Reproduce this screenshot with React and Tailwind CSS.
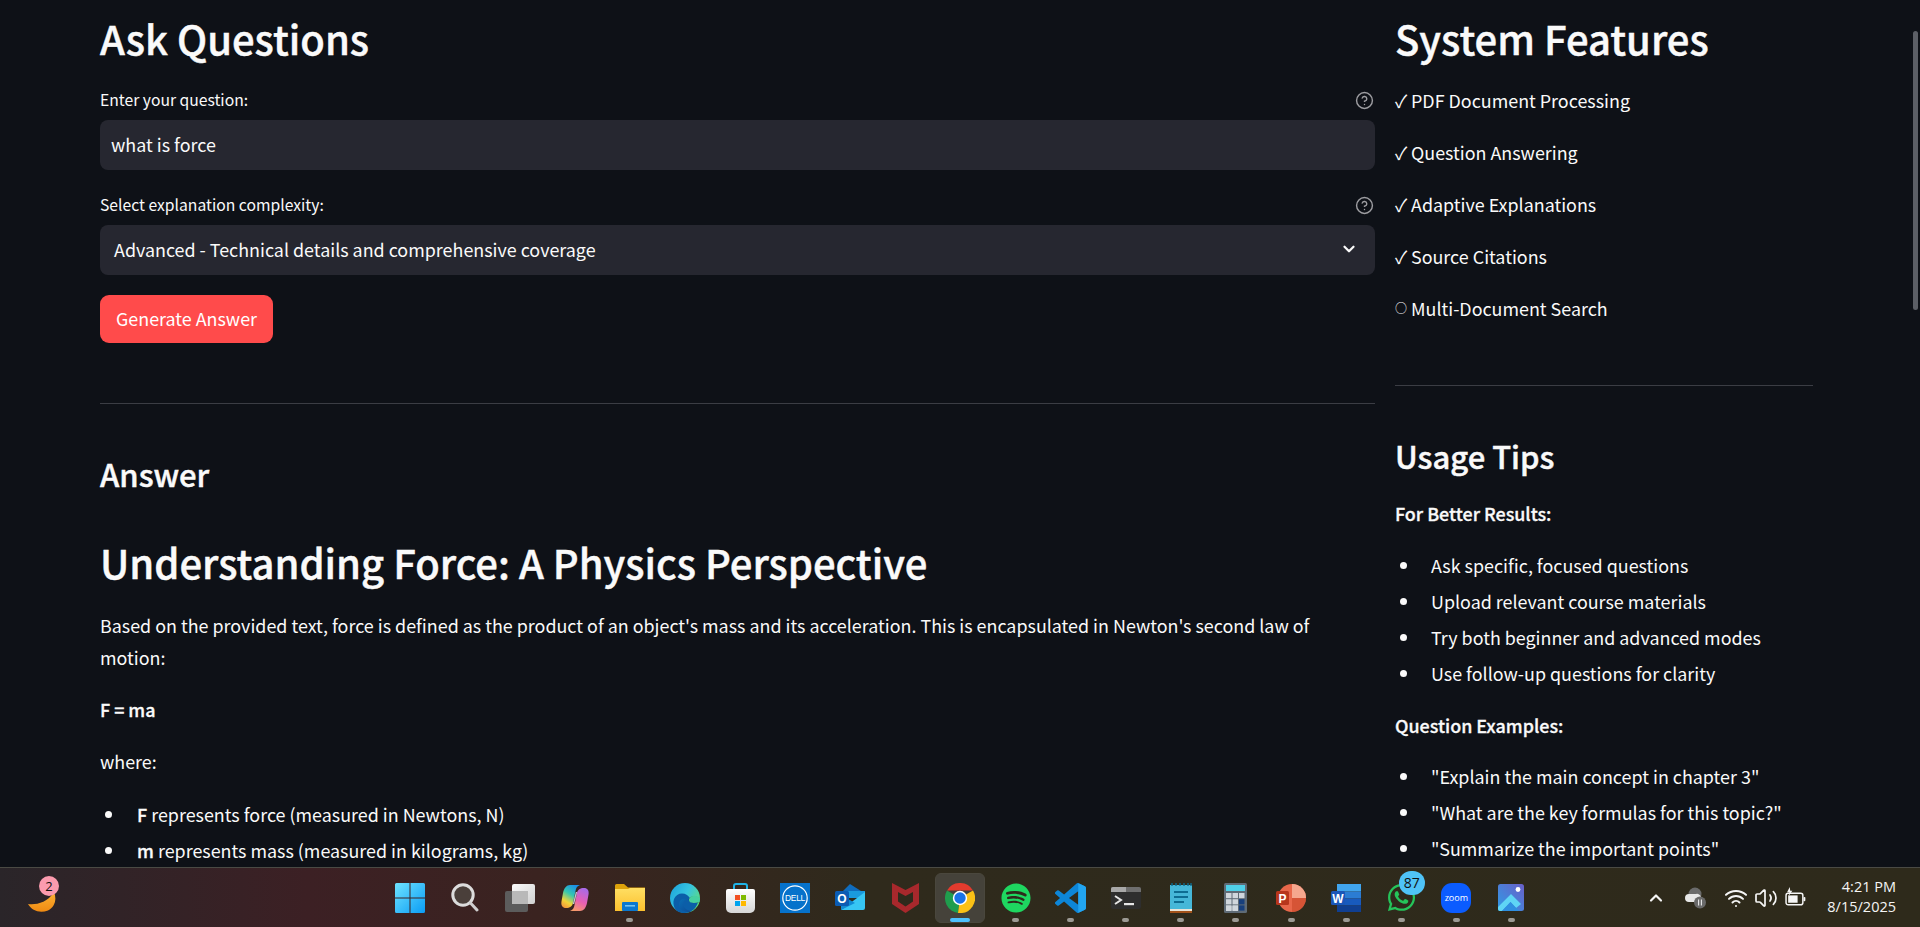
import { ChevronDown, ChevronUp, CircleHelp, Volume2, Wifi } from "lucide-react";
import { FaSpotify, FaWhatsapp } from "react-icons/fa";

const FONT = { fontFamily: "'Noto Sans CJK SC', 'Source Sans 3', sans-serif" };

function Help() {
  return <CircleHelp size={19} strokeWidth={1.8} className="text-[#9d9da1] mr-[1px]" />;
}

function FieldLabel({ children, className = "" }) {
  return (
    <div className={`flex items-center justify-between h-6 text-[15.7px] leading-6 text-[#fafafa] ${className}`}>
      <span>{children}</span>
      <Help />
    </div>
  );
}

function Bullets({ items, className = "", pad = "pl-[37px]", dot = "left-[5px]" }) {
  return (
    <ul className={className}>
      {items.map((t, i) => (
        <li key={i} className={`relative h-9 leading-[34px] ${pad}`}>
          <span className={`absolute ${dot} top-[14px] w-[7px] h-[7px] rounded-full bg-[#fafafa]`} />
          {t}
        </li>
      ))}
    </ul>
  );
}

function Windows() {
  return (
    <svg width="30" height="30" viewBox="0 0 30 30">
      <defs>
        <linearGradient id="win" x1="0" y1="0" x2="1" y2="1">
          <stop offset="0" stopColor="#6fe3ff" />
          <stop offset="1" stopColor="#0a9cf5" />
        </linearGradient>
      </defs>
      <path fill="url(#win)" d="M1.5 0H14.5V14.5H0V1.5A1.5 1.5 0 0 1 1.5 0ZM15.5 0H28.5A1.5 1.5 0 0 1 30 1.5V14.5H15.5ZM0 15.5H14.5V30H1.5A1.5 1.5 0 0 1 0 28.5ZM15.5 15.5H30V28.5A1.5 1.5 0 0 1 28.5 30H15.5Z" />
    </svg>
  );
}

function Search() {
  return (
    <svg width="28" height="29" viewBox="0 0 28 29">
      <circle cx="12" cy="12" r="10.2" fill="#4a3f3a" stroke="#dcdcdc" strokeWidth="3" />
      <path d="M19.5 20 L26 27" stroke="#cfcfcf" strokeWidth="3" strokeLinecap="round" />
    </svg>
  );
}

function TaskView() {
  return (
    <svg width="30" height="28" viewBox="0 0 30 28">
      <defs>
        <linearGradient id="tv" x1="0" y1="0" x2="1" y2="1">
          <stop offset="0" stopColor="#fbfbfb" />
          <stop offset="1" stopColor="#d0d0d0" />
        </linearGradient>
      </defs>
      <rect x="0" y="7" width="23" height="21" rx="2" fill="#5c5c5c" />
      <rect x="7" y="0" width="23" height="20" rx="2" fill="url(#tv)" />
      <rect x="7" y="7" width="16" height="13" fill="#b9b9b9" />
    </svg>
  );
}

function Copilot() {
  return (
    <svg width="28" height="26" viewBox="0 0 28 26">
      <defs>
        <linearGradient id="cpA" x1="0.7" y1="0" x2="0.2" y2="1">
          <stop offset="0" stopColor="#1b8fe8" />
          <stop offset="0.4" stopColor="#35c7b0" />
          <stop offset="0.75" stopColor="#f2d438" />
          <stop offset="1" stopColor="#f59a3c" />
        </linearGradient>
        <linearGradient id="cpB" x1="0.7" y1="0" x2="0.3" y2="1">
          <stop offset="0" stopColor="#a86ae8" />
          <stop offset="0.55" stopColor="#e85fb4" />
          <stop offset="1" stopColor="#f79a6a" />
        </linearGradient>
      </defs>
      <path fill="url(#cpA)" d="M9 0 H19 C16 1 15 3 14.5 6 L12 18 C11.2 21.5 9 23 5 23 C1.5 23 0 20.5 0.4 17 L2 8 C3 3 5.5 0 9 0Z" />
      <path fill="url(#cpB)" d="M19 26 H9 C12 25 13 23 13.5 20 L16 8 C16.8 4.5 19 3 23 3 C26.5 3 28 5.5 27.6 9 L26 18 C25 23 22.5 26 19 26Z" />
      <path fill="#e8eefb" opacity="0.8" d="M14.8 7 L16.2 7 L13.2 19 L11.8 19Z" />
    </svg>
  );
}

function Folder() {
  return (
    <svg width="30" height="27" viewBox="0 0 30 27">
      <defs>
        <linearGradient id="fo" x1="0" y1="0" x2="0" y2="1">
          <stop offset="0" stopColor="#ffdf63" />
          <stop offset="1" stopColor="#fcc02e" />
        </linearGradient>
      </defs>
      <path fill="#dda20b" d="M0 1.5A1.5 1.5 0 0 1 1.5 0H9L13 3.5H30V12H0Z" />
      <path fill="url(#fo)" d="M0 5H13L15 4H30V27H0Z" />
      <rect x="7" y="18" width="16" height="9" rx="1" fill="#0b78d0" />
      <rect x="10" y="21" width="10" height="1.6" fill="#73c2f0" />
    </svg>
  );
}

function Edge() {
  return (
    <svg width="30" height="30" viewBox="0 0 30 30">
      <defs>
        <linearGradient id="edA" x1="0" y1="0" x2="1" y2="0.6">
          <stop offset="0" stopColor="#1aa0dc" />
          <stop offset="0.55" stopColor="#36c4e0" />
          <stop offset="1" stopColor="#5fdc7e" />
        </linearGradient>
        <linearGradient id="edB" x1="0" y1="0" x2="1" y2="1">
          <stop offset="0" stopColor="#0a6cb4" />
          <stop offset="1" stopColor="#0c4a94" />
        </linearGradient>
      </defs>
      <circle cx="15" cy="15" r="15" fill="url(#edA)" />
      <path fill="#0b5ea8" d="M12 30 C5 29 2 22 4 16 C6 11 12 9 17 12 C20 14 21 17 21 19 H28 C27 24 22 30 15 30Z" />
      <path fill="#2e2a1e" d="M30 19 C30 19 25 20.5 21 19 C19 18.5 18.5 17 19 16 C20 13 24 13 27 14 C28.5 14.5 30 15 30 15Z" />
      <path fill="#46d0a0" d="M19 16 C21 12 27 12 30 15 C30 17 30 18 29.7 19 C26 20 21 20.5 19.5 18.5 C19 18 19 17 19 16Z" />
      <path fill="url(#edB)" d="M14 28 C9 27 8 22 10 18 C11.5 15.5 15 15 17 17 C14.5 17 13 19 13.5 22 C14 25 17 27.5 21 28.2 C19 29.4 16.5 29.4 14 28Z" />
    </svg>
  );
}

function Store() {
  return (
    <svg width="29" height="30" viewBox="0 0 29 30">
      <defs>
        <linearGradient id="st" x1="0" y1="0" x2="0" y2="1">
          <stop offset="0" stopColor="#ffffff" />
          <stop offset="1" stopColor="#d6d6d6" />
        </linearGradient>
      </defs>
      <path d="M8 7 V3 A2 2 0 0 1 10 1 H19 A2 2 0 0 1 21 3 V7" fill="none" stroke="#1fb4e8" strokeWidth="2" />
      <path fill="url(#st)" d="M2 6 H27 A2 2 0 0 1 29 8 V25 A5 5 0 0 1 24 30 H5 A5 5 0 0 1 0 25 V8 A2 2 0 0 1 2 6Z" />
      <rect x="9" y="12" width="5" height="5" fill="#f25022" />
      <rect x="15" y="12" width="5" height="5" fill="#7fba00" />
      <rect x="9" y="18" width="5" height="5" fill="#00a4ef" />
      <rect x="15" y="18" width="5" height="5" fill="#ffb900" />
    </svg>
  );
}

function Dell() {
  return (
    <svg width="30" height="30" viewBox="0 0 30 30">
      <rect width="30" height="30" fill="#0672cb" />
      <circle cx="15" cy="15" r="12.2" fill="none" stroke="#fff" strokeWidth="1.2" />
      <text x="15" y="18" textAnchor="middle" fontSize="8.5" fill="#fff" fontFamily="'Liberation Sans', sans-serif" letterSpacing="-0.3">DELL</text>
    </svg>
  );
}

function Outlook() {
  return (
    <svg width="30" height="27" viewBox="0 0 30 27">
      <path fill="#0f6cbd" d="M15 0 L26 7 H8 Z" />
      <path fill="#1a9ade" d="M8 7 H30 V14 H8Z" />
      <path fill="#37c6f4" d="M30 8 V24 A2 2 0 0 1 28 26 H6 L30 8Z" />
      <path fill="#0f8ad4" d="M8 12 L20 19 L6 26 V12Z" />
      <rect x="0" y="7" width="14" height="15" rx="1.5" fill="#0b5cb4" />
      <text x="7" y="19" textAnchor="middle" fontSize="12" fontWeight="700" fill="#fff" fontFamily="'Liberation Sans', sans-serif">O</text>
    </svg>
  );
}

function McAfee() {
  return (
    <svg width="27" height="30" viewBox="0 0 27 30">
      <path fillRule="evenodd" fill="#a8282c" d="M0 0 L13.5 7 L27 0 V21 L13.5 30 L0 21 Z M6 9 V18.5 L13.5 23.5 L21 18.5 V9 L13.5 13 Z" />
    </svg>
  );
}

function Chrome() {
  return (
    <svg width="30" height="30" viewBox="0 0 30 30">
      <path fill="#e33b2e" d="M2 7.5 A15 15 0 0 1 28 7.5 H15 Z" />
      <path fill="#1f9d4d" d="M2 7.5 A15 15 0 0 0 13 29.9 L15 15 Z" />
      <path fill="#fbc116" d="M28 7.5 A15 15 0 0 1 13 29.9 L15 15 Z" />
      <circle cx="15" cy="15" r="7.2" fill="#fff" />
      <circle cx="15" cy="15" r="5.7" fill="#1a73e8" />
    </svg>
  );
}

function VSCode() {
  return (
    <svg width="31" height="30" viewBox="0 0 24 24" preserveAspectRatio="none">
      <path fill="#0d86d8" d="M23.15 2.587L18.21.21a1.494 1.494 0 0 0-1.705.29l-9.46 8.63-4.12-3.128a.999.999 0 0 0-1.276.057L.327 7.261A1 1 0 0 0 .326 8.74L3.899 12 .326 15.26a1 1 0 0 0 .001 1.479L1.65 17.94a.999.999 0 0 0 1.276.057l4.12-3.128 9.46 8.63a1.492 1.492 0 0 0 1.704.29l4.942-2.377A1.5 1.5 0 0 0 24 20.06V3.939a1.5 1.5 0 0 0-.85-1.352zm-5.146 14.861L10.826 12l7.178-5.448v10.896z" />
      <path fill="#22a5f1" d="M18 0.05 L18.21.21 L23.15 2.587A1.5 1.5 0 0 1 24 3.939V20.06a1.5 1.5 0 0 1-.85 1.352L18.2 23.8 L18 23.9Z" />
    </svg>
  );
}

function Terminal() {
  return (
    <svg width="30" height="22" viewBox="0 0 30 22">
      <rect width="30" height="22" rx="2" fill="#2e2e2e" />
      <path fill="#6e6e6e" d="M2 0 H28 A2 2 0 0 1 30 2 V5 H0 V2 A2 2 0 0 1 2 0Z" />
      <path fill="#a8a8a8" d="M2 0 H15 V5 H0 V2 A2 2 0 0 1 2 0Z" />
      <path d="M4 9 L10 13 L4 17" fill="none" stroke="#e6e6e6" strokeWidth="2" />
      <rect x="13" y="16" width="10" height="2.2" fill="#e6e6e6" />
    </svg>
  );
}

function Notepad() {
  return (
    <svg width="22" height="30" viewBox="0 0 22 30">
      <rect y="2" width="22" height="25" fill="#46b7d8" />
      <path d="M2 0 V3 M6 0 V3 M10 0 V3 M14 0 V3 M18 0 V3 M21 0 V3" stroke="#0e6b8e" strokeWidth="1.4" />
      <rect x="4" y="8" width="14" height="2" fill="#0e6d92" />
      <rect x="4" y="13" width="14" height="2" fill="#0e6d92" />
      <rect x="4" y="18" width="10" height="2" fill="#0e6d92" />
      <rect y="26" width="22" height="2" fill="#e9e4d8" />
      <rect y="28" width="22" height="2" fill="#a3521a" />
    </svg>
  );
}

function Calculator() {
  return (
    <svg width="23" height="30" viewBox="0 0 23 30">
      <rect width="23" height="30" rx="1.5" fill="#5f6b76" />
      <rect x="2" y="2" width="19" height="6" fill="#4fd0e8" />
      {[0, 1, 2].map((r) =>
        [0, 1, 2].map((c) => (
          <rect key={`${r}${c}`} x={2 + c * 6.5} y={10 + r * 6.2} width="5.5" height="5.2" fill={c === 2 && r > 0 ? "#173f7c" : "#d0d6dc"} />
        ))
      )}
      <rect x="2" y="22.6" width="5.5" height="5.4" fill="#d0d6dc" />
      <rect x="8.5" y="22.6" width="5.5" height="5.4" fill="#d0d6dc" />
    </svg>
  );
}

function PowerPoint() {
  return (
    <svg width="30" height="30" viewBox="0 0 30 30">
      <circle cx="16" cy="15" r="14" fill="#e8674a" />
      <path fill="#f5a78e" d="M16 1 A14 14 0 0 1 30 15 H16Z" />
      <path fill="#c9472a" d="M16 15 H30 A14 14 0 0 1 16 29Z" opacity="0.6" />
      <rect x="0" y="8" width="13" height="14" rx="1.5" fill="#b7361c" />
      <text x="6.5" y="19.5" textAnchor="middle" fontSize="12" fontWeight="700" fill="#fff" fontFamily="'Liberation Sans', sans-serif">P</text>
    </svg>
  );
}

function Word() {
  return (
    <svg width="30" height="30" viewBox="0 0 30 30">
      <rect x="6" y="1" width="24" height="7.5" fill="#41a5ee" />
      <rect x="6" y="8.5" width="24" height="7" fill="#2b7cd3" />
      <rect x="6" y="15.5" width="24" height="7" fill="#185abd" />
      <rect x="6" y="22.5" width="24" height="6.5" fill="#103f91" />
      <rect x="0" y="8" width="14" height="14" rx="1.5" fill="#1a56b8" />
      <text x="7" y="19.5" textAnchor="middle" fontSize="12" fontWeight="700" fill="#fff" fontFamily="'Liberation Sans', sans-serif">W</text>
    </svg>
  );
}

function Photos() {
  return (
    <svg width="26" height="27" viewBox="0 0 26 27">
      <defs>
        <linearGradient id="ph" x1="0" y1="1" x2="1" y2="0">
          <stop offset="0" stopColor="#2e9ce6" />
          <stop offset="1" stopColor="#6a5fc8" />
        </linearGradient>
      </defs>
      <rect width="26" height="27" rx="2.5" fill="url(#ph)" />
      <circle cx="20" cy="5.5" r="2.4" fill="#fff" />
      <path fill="#5fd5f5" d="M0 23 L13 10 L23 20 L18 24 L12.5 18 L4 27 H2 A2 2 0 0 1 0 25Z" />
      <path fill="#2f8fe0" d="M4 27 L12.5 18 L21 27Z" />
    </svg>
  );
}

function Moon() {
  return (
    <svg width="28" height="20" viewBox="0 0 28 20">
      <defs>
        <linearGradient id="mo" x1="0" y1="0" x2="0" y2="1">
          <stop offset="0" stopColor="#fbb234" />
          <stop offset="1" stopColor="#f08a12" />
        </linearGradient>
      </defs>
      <path fill="url(#mo)" d="M0 12 C8 13 19 11 26 0 C29 7 27 15 20 18.5 C12 21.5 4 19 0 12Z" />
    </svg>
  );
}

function Cloud() {
  return (
    <svg width="21" height="22" viewBox="0 0 21 22">
      <circle cx="10" cy="7" r="6.5" fill="#6b6b6b" />
      <path fill="#e8e8e8" d="M4 15 A4 4 0 0 1 4 7 H11 A4 4 0 0 1 13 15Z" />
      <circle cx="15" cy="15.5" r="6" fill="#6a6a6a" />
      <path d="M13.6 12.5 V18.5 M16.4 12.5 V18.5" stroke="#e8e8e8" strokeWidth="1.1" />
    </svg>
  );
}

function Battery() {
  return (
    <svg width="21" height="21" viewBox="0 0 20 20">
      <rect x="1" y="6" width="16" height="11" rx="2" fill="none" stroke="#f5f5f5" strokeWidth="1.4" />
      <rect x="3" y="8" width="9" height="7" fill="#f5f5f5" />
      <rect x="17.6" y="9.5" width="1.8" height="4" rx="0.8" fill="#f5f5f5" />
      <path d="M4.5 0 L2 5 H4.2 L3.4 8.5 L7 3.5 H5Z" fill="#f5f5f5" />
    </svg>
  );
}

function Slot({ children, dot, active }) {
  return (
    <div className="relative w-[55.1px] h-full flex items-center justify-center">
      {active && <div className="absolute left-[2.5px] top-[5px] w-[50px] h-[50px] rounded-[6px] bg-[#45423a] border border-[#4a473d]" />}
      <div className="relative flex items-center justify-center">{children}</div>
      {dot && <div className="absolute left-[24px] top-[50px] w-[7px] h-[4px] rounded-full bg-[#9c9a94]" />}
      {active && <div className="absolute left-[17.5px] top-[50px] w-[20px] h-[4px] rounded-full bg-[#4cc2ff]" />}
    </div>
  );
}

const sys = { fontFamily: "'Open Sans', 'Noto Sans', sans-serif" };

function Feature({ mark, children }) {
  return (
    <p className="h-8 leading-8 flex items-center">
      <span className={mark === "○" ? "w-4 text-[12px]" : "w-4"}>{mark}</span>
      <span>{children}</span>
    </p>
  );
}

const HEAVY = "font-medium [-webkit-text-stroke:0.45px_#fafafa]";
const STRONG = "font-medium [-webkit-text-stroke:0.3px_#fafafa]";

export default function App() {
  return (
    <div style={FONT} className="w-[1920px] h-[927px] flex flex-col overflow-hidden bg-[#0e1117] text-[#fafafa]">
      <main className="relative flex-1 min-h-0 overflow-hidden pl-[100px] flex gap-5 text-[17.9px]">
        <section className="w-[1275px] shrink-0 pt-[12px]">
          <h2 className={`h-[52px] leading-[52px] text-[40px] ${HEAVY}`}>Ask Questions</h2>
          <FieldLabel className="mt-6">Enter your question:</FieldLabel>
          <div className="mt-2 h-[50px] rounded-[8px] bg-[#262730] px-[11px] pb-[2px] flex items-center">what is force</div>
          <FieldLabel className="mt-[23px]">Select explanation complexity:</FieldLabel>
          <div className="mt-2 h-[50px] rounded-[8px] bg-[#262730] pl-[14px] pr-[17px] pb-[2px] flex items-center justify-between">
            <span>Advanced - Technical details and comprehensive coverage</span>
            <ChevronDown size={18} strokeWidth={3} />
          </div>
          <button className="mt-5 h-[48px] w-[173px] rounded-[9px] bg-[#ff4b4b] text-white pb-[2px] flex items-center justify-center">Generate Answer</button>
          <hr className="mt-[60px] border-0 border-t border-[#3b3d44]" />
          <h3 className={`mt-[50px] h-10 leading-10 text-[31px] ${HEAVY}`}>Answer</h3>
          <h2 className={`mt-[40px] h-14 leading-[56px] text-[40px] ${HEAVY}`}>Understanding Force: A Physics Perspective</h2>
          <p className="mt-[19px] leading-8">Based on the provided text, force is defined as the product of an object's mass and its acceleration. This is encapsulated in Newton's second law of motion:</p>
          <p className={`mt-5 leading-8 ${STRONG}`}>F = ma</p>
          <p className="mt-5 leading-8">where:</p>
          <Bullets
            className="mt-5"
            items={[
              <><b className={STRONG}>F</b> represents force (measured in Newtons, N)</>,
              <><b className={STRONG}>m</b> represents mass (measured in kilograms, kg)</>,
            ]}
          />
        </section>
        <aside className="w-[418px] shrink-0 pt-[12px]">
          <h2 className={`h-[52px] leading-[52px] text-[40px] ${HEAVY}`}>System Features</h2>
          <div className="mt-5 flex flex-col gap-5">
            <Feature mark="✓">PDF Document Processing</Feature>
            <Feature mark="✓">Question Answering</Feature>
            <Feature mark="✓">Adaptive Explanations</Feature>
            <Feature mark="✓">Source Citations</Feature>
            <Feature mark="○">Multi-Document Search</Feature>
          </div>
          <hr className="mt-[61px] border-0 border-t border-[#3b3d44]" />
          <h3 className={`mt-[50px] h-10 leading-10 text-[31px] ${HEAVY}`}>Usage Tips</h3>
          <p className={`mt-[22px] h-8 leading-[30px] ${STRONG}`}>For Better Results:</p>
          <Bullets
            className="mt-[18px]"
            pad="pl-[36px]"
            items={["Ask specific, focused questions", "Upload relevant course materials", "Try both beginner and advanced modes", "Use follow-up questions for clarity"]}
          />
          <p className={`mt-[18px] h-8 leading-[30px] ${STRONG}`}>Question Examples:</p>
          <Bullets
            className="mt-[17px]"
            pad="pl-[36px]"
            items={['"Explain the main concept in chapter 3"', '"What are the key formulas for this topic?"', '"Summarize the important points"']}
          />
        </aside>
        <div className="absolute right-[2px] top-[31px] w-[5px] h-[279px] rounded-full bg-[#5c5f66]" />
      </main>

      <footer className="relative h-[60px] shrink-0 flex border-t border-[#4a4a44] bg-[linear-gradient(90deg,#2a2529_0%,#3c2024_16%,#3a2320_28%,#2f2a1c_45%,#2e2a1b_100%)] text-white">
        <div className="w-[382px] shrink-0 pl-[28px] pt-[24px] relative">
          <Moon />
          <div className="absolute left-[39px] top-[8px] w-5 h-5 rounded-full bg-[#fb9bae] text-[#111] text-[13px] leading-5 text-center" style={sys}>2</div>
        </div>
        <div className="flex h-full">
          <Slot><Windows /></Slot>
          <Slot><Search /></Slot>
          <Slot><TaskView /></Slot>
          <Slot><Copilot /></Slot>
          <Slot dot><Folder /></Slot>
          <Slot><Edge /></Slot>
          <Slot><Store /></Slot>
          <Slot><Dell /></Slot>
          <Slot><Outlook /></Slot>
          <Slot><McAfee /></Slot>
          <Slot active><Chrome /></Slot>
          <Slot dot><FaSpotify size={30} color="#1ed760" /></Slot>
          <Slot dot><VSCode /></Slot>
          <Slot dot><Terminal /></Slot>
          <Slot dot><Notepad /></Slot>
          <Slot dot><Calculator /></Slot>
          <Slot dot><PowerPoint /></Slot>
          <Slot dot><Word /></Slot>
          <Slot dot>
            <FaWhatsapp size={31} color="#25c45a" />
            <span className="absolute left-[13px] top-[-11px] w-[26px] h-[24px] rounded-full bg-[#4fc3f7] text-[#111] text-[14px] leading-6 text-center" style={sys}>87</span>
          </Slot>
          <Slot dot>
            <div className="w-[30px] h-[30px] rounded-[11px] bg-[#0b5cff] text-white text-[9px] leading-[30px] text-center" style={sys}>zoom</div>
          </Slot>
          <Slot dot><Photos /></Slot>
        </div>
        <div className="flex-1 flex items-center pl-[107px] pr-[24px]">
          <ChevronUp size={20} strokeWidth={2.6} className="text-[#f5f5f5]" />
          <div className="ml-[19px]"><Cloud /></div>
          <Wifi size={24} strokeWidth={2} className="ml-[18px] text-[#f5f5f5]" />
          <Volume2 size={24} strokeWidth={1.7} className="ml-[6px] text-[#f5f5f5]" />
          <div className="ml-[7px]"><Battery /></div>
          <div className="ml-auto text-right text-[14.5px] leading-5 text-[#f5f5f5] -mt-[2px]" style={sys}>
            <div>4:21 PM</div>
            <div>8/15/2025</div>
          </div>
        </div>
      </footer>
    </div>
  );
}
